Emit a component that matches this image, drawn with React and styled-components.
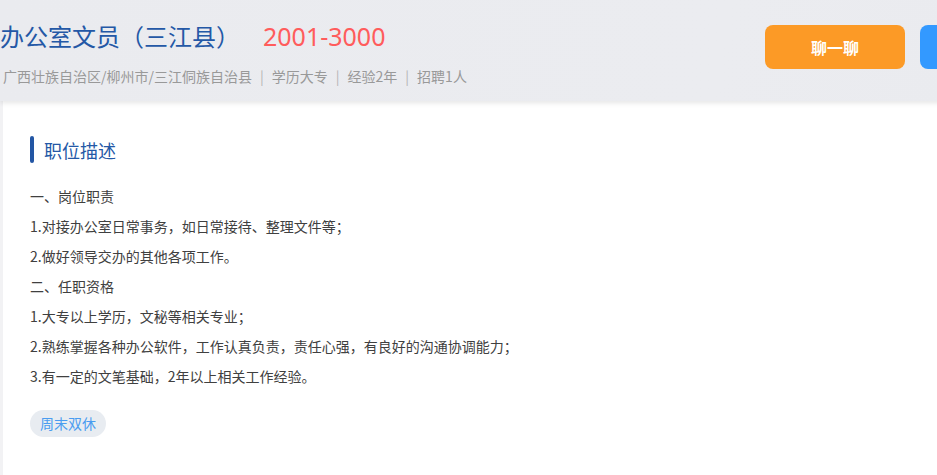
import React from 'react'
import styled, { createGlobalStyle } from 'styled-components'

const GlobalStyle = createGlobalStyle`
  html, body {
    margin: 0;
    padding: 0;
    background: #f2f2f4;
    overflow: hidden;
    font-family: "Microsoft YaHei", "Noto Sans CJK SC", "Noto Sans", sans-serif;
  }
  *, *::before, *::after { box-sizing: border-box; }
`

const Page = styled.div`
  width: 1200px;
  height: 475px;
  overflow: hidden;
`

const Header = styled.header`
  height: 101px;
  padding-top: 18px;
  display: flex;
  background: linear-gradient(100deg, #eaebef 0%, #ebecf0 60%, #e9eaee 100%);
  box-shadow: 0 2px 5px rgba(0, 0, 0, 0.1);
  position: relative;
  z-index: 1;
`

const JobInfo = styled.div`
  width: 765px;
`

const TitleRow = styled.div`
  display: flex;
  align-items: center;
  height: 36px;
  line-height: 36px;
`

const JobTitle = styled.h1`
  margin: 0;
  font-size: 24px;
  font-weight: 400;
  color: #2458a6;
`

const Salary = styled.span`
  margin-left: 23px;
  font-size: 25px;
  color: #ff5c5c;
  font-family: "Microsoft YaHei", "Noto Sans", "Noto Sans CJK SC", sans-serif;
`

const Meta = styled.div`
  margin-top: 12px;
  padding-left: 3px;
  font-size: 14px;
  line-height: 20px;
  color: #999;
  display: flex;
`

const Sep = styled.span`
  margin: 0 8px;
  color: #b5b5b5;
`

const Actions = styled.div`
  display: flex;
  gap: 15px;
  padding-top: 7px;
`

const ActionButton = styled.button`
  width: 140px;
  height: 44px;
  border: none;
  border-radius: 8px;
  background: ${p => p.$color};
  color: #fff;
  font-size: 16px;
  font-weight: 700;
  font-family: "Noto Sans CJK SC", sans-serif;
  cursor: pointer;
`

const Card = styled.section`
  margin-left: 3px;
  background: #fff;
  height: 374px;
  padding: 35px 27px 0;
`

const SectionTitle = styled.h2`
  margin: 0;
  height: 27px;
  display: flex;
  align-items: center;
  font-size: 18px;
  font-weight: 400;
  color: #2458a6;
  &::before {
    content: '';
    width: 4px;
    height: 27px;
    border-radius: 2px;
    background: #2356a4;
    margin-right: 10px;
  }
`

const Description = styled.div`
  margin-top: 18px;
`

const Line = styled.p`
  margin: 0;
  font-size: 14px;
  line-height: 30px;
  color: #404040;
`

const Tags = styled.div`
  margin-top: 19px;
  display: flex;
  gap: 10px;
`

const Tag = styled.span`
  height: 27px;
  line-height: 27px;
  padding: 0 10px;
  border-radius: 14px;
  background: #e8ecf1;
  color: #4a9cf0;
  font-size: 14px;
`

const lines = [
  '一、岗位职责',
  '1.对接办公室日常事务，如日常接待、整理文件等；',
  '2.做好领导交办的其他各项工作。',
  '二、任职资格',
  '1.大专以上学历，文秘等相关专业；',
  '2.熟练掌握各种办公软件，工作认真负责，责任心强，有良好的沟通协调能力；',
  '3.有一定的文笔基础，2年以上相关工作经验。',
]

const meta = ['广西壮族自治区/柳州市/三江侗族自治县', '学历大专', '经验2年', '招聘1人']

export default function App() {
  return (
    <Page>
      <GlobalStyle />
      <Header>
        <JobInfo>
          <TitleRow>
            <JobTitle>办公室文员（三江县）</JobTitle>
            <Salary>2001-3000</Salary>
          </TitleRow>
          <Meta>
            {meta.map((m, i) => (
              <React.Fragment key={m}>
                {i > 0 && <Sep>|</Sep>}
                <span>{m}</span>
              </React.Fragment>
            ))}
          </Meta>
        </JobInfo>
        <Actions>
          <ActionButton $color="#fc9a26">聊一聊</ActionButton>
          <ActionButton $color="#3399ff" aria-label="投递简历" />
        </Actions>
      </Header>
      <Card>
        <SectionTitle>职位描述</SectionTitle>
        <Description>
          {lines.map(l => (
            <Line key={l}>{l}</Line>
          ))}
        </Description>
        <Tags>
          <Tag>周末双休</Tag>
        </Tags>
      </Card>
    </Page>
  )
}
